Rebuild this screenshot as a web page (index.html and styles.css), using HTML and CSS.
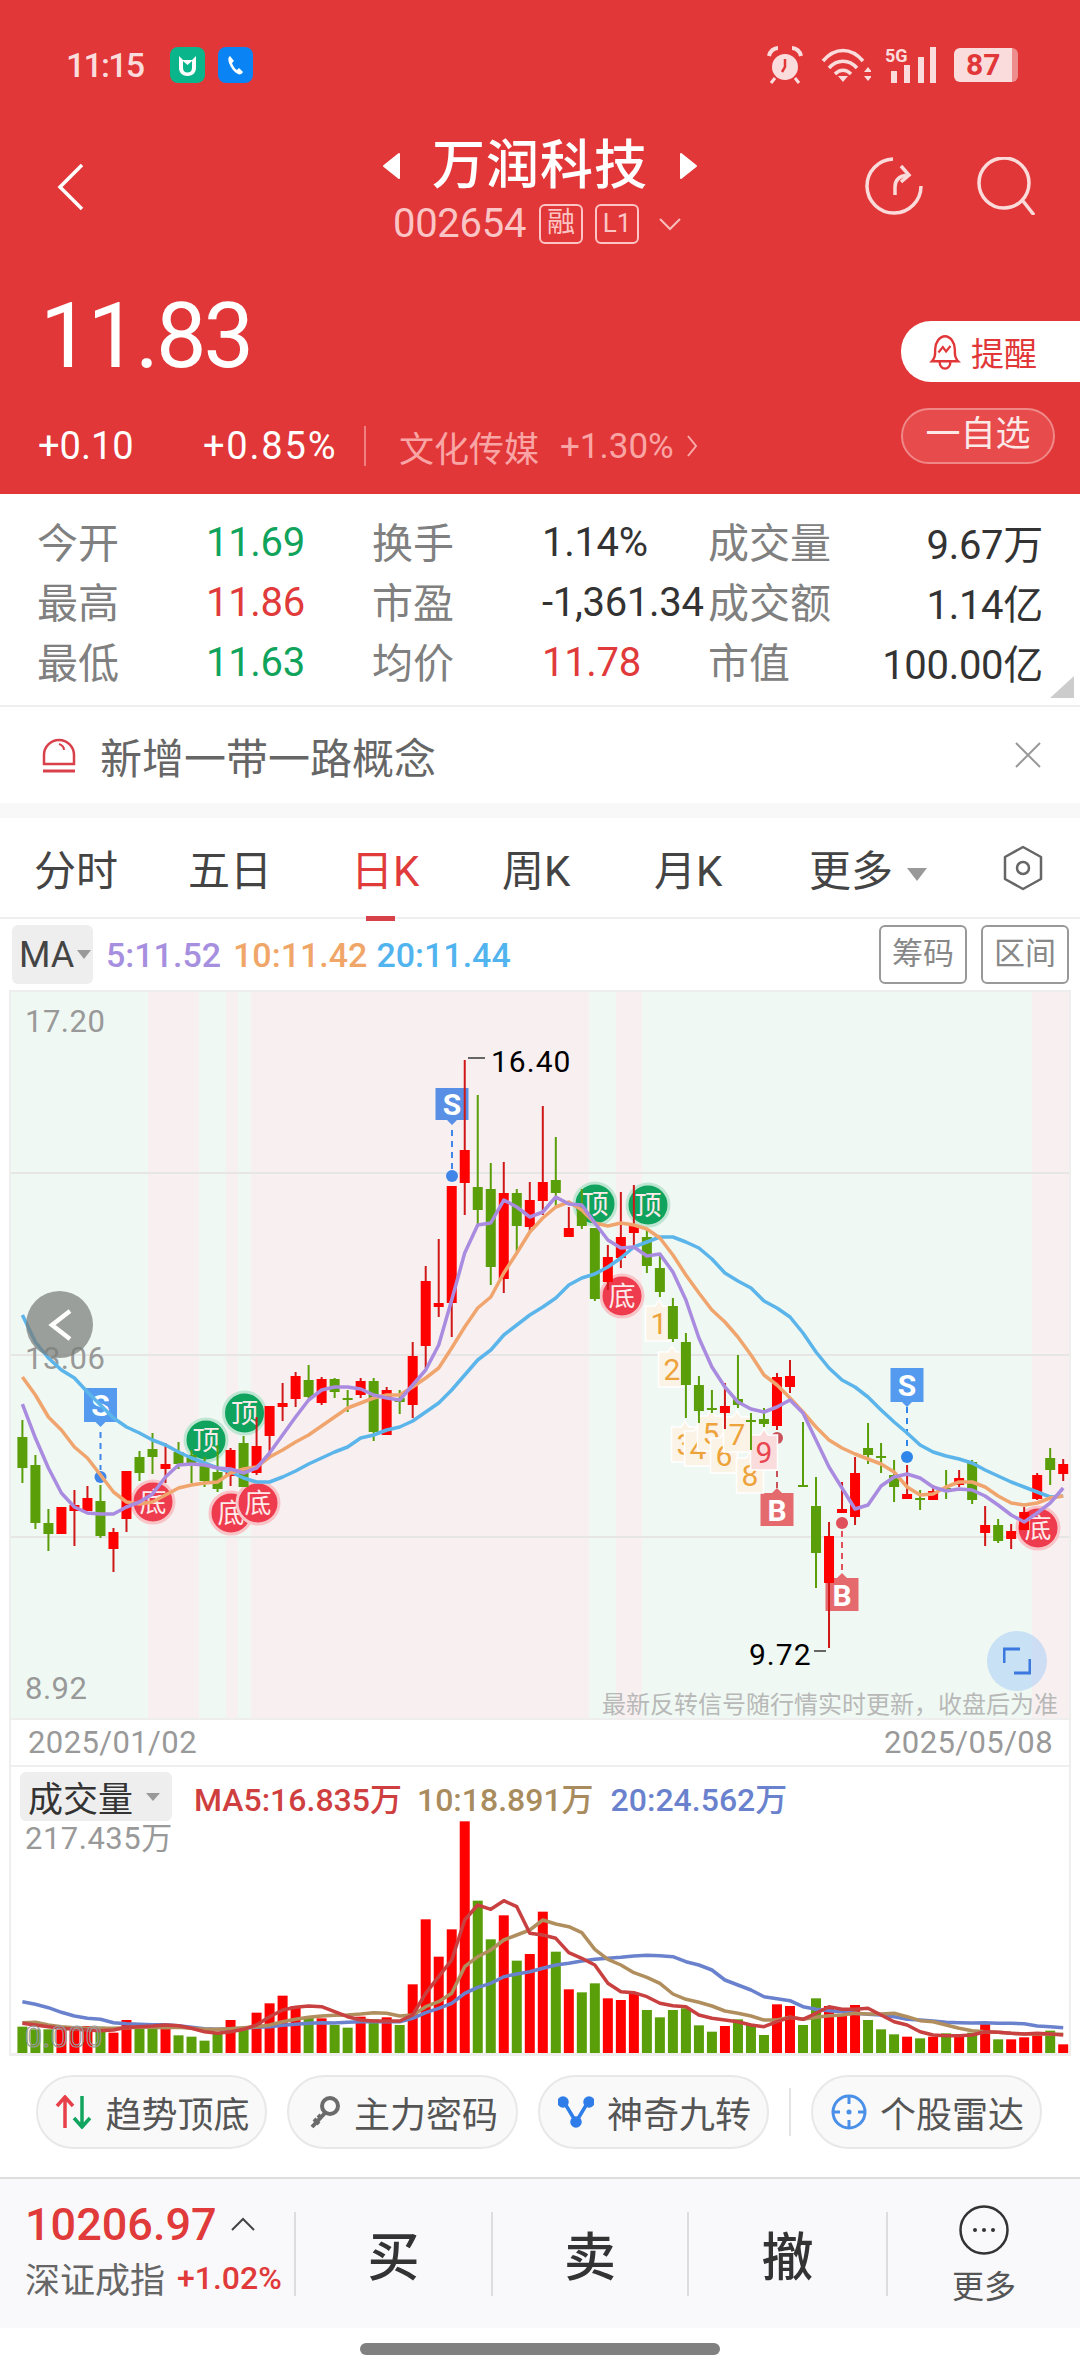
FILE: index.html
```html
<!DOCTYPE html>
<html lang="zh-CN">
<head>
    <meta charset="UTF-8">
    <meta name="viewport" content="width=device-width, initial-scale=1.0">
    <title>万润科技</title>
    <link rel="stylesheet" href="styles.css">
</head>
<body>
<div class="page">
    <div class="header">
        <div class="status">
            <span class="time">11:15</span>
            <svg class="app-icon" width="35" height="36" viewBox="0 0 35 36"><rect width="35" height="36" rx="8" fill="#0bb58c"/><path d="M9 9l4 4h9l4-4v12c0 5-4 8-8.500 8S9 26 9 21z" fill="#fff"/><path d="M13 14l4.500 4 4.500-4v7c0 3-2 4.500-4.500 4.500S13 24 13 21z" fill="#0bb58c"/></svg>
            <svg class="app-icon app-icon-2" width="35" height="36" viewBox="0 0 35 36"><rect width="35" height="36" rx="8" fill="#0a84f5"/><path d="M12 9c-2 1-2 4-1 7 2 5 5 9 9 11 2 1 4 0 5-2l-4-4-2 2c-2-1-4-4-5-7l2-2z" fill="#fff"/></svg>
            <div class="status-right">
                <svg width="38" height="38" viewBox="0 0 38 38" fill="none" stroke="#fbdcdc"><circle cx="19" cy="21" r="13" fill="#fbdcdc" stroke="none"/><path d="M19 13v8l-3 5" stroke="#e13739" stroke-width="2.500"/><path d="M3 10c1-5 5-8 9-8M35 10c-1-5-5-8-9-8" stroke-width="4"/><path d="M9 32l-4 5M29 32l4 5" stroke-width="3"/></svg>
                <svg class="wifi" width="50" height="36" viewBox="0 0 50 36" fill="none" stroke="#fbdcdc" stroke-width="3.500"><path d="M2 14c12-14 28-14 40 0M8 21c8-9 20-9 28 0M14 27c5-5 11-5 16 0"/><path d="M22 35l-5-6h10z" fill="#fbdcdc" stroke="none"/><path d="M47 20l-4 5h8zM47 34l-4-5h8z" fill="#fbdcdc" stroke="none"/></svg>
                <div class="signal">
                    <span class="five-g">5G</span>
                    <svg width="46" height="36" viewBox="0 0 46 36" fill="#fbdcdc"><rect x="0" y="24" width="6" height="12"/><rect x="13" y="18" width="6" height="18"/><rect x="27" y="10" width="6" height="26"/><rect x="39" y="0" width="6" height="36"/></svg>
                </div>
                <div class="battery"><span>87</span></div>
            </div>
        </div>
        <div class="nav">
            <svg class="back" width="28" height="48" viewBox="0 0 28 48" fill="none" stroke="#fff" stroke-width="3.500"><path d="M25 2L3 24l22 22"/></svg>
            <div class="nav-center">
                <div class="title-row">
                    <svg width="18" height="26" viewBox="0 0 18 26"><path d="M16 1v24L1 13z" fill="#fff" stroke="#fff" stroke-width="2" stroke-linejoin="round"/></svg>
                    <h1 class="title">万润科技</h1>
                    <svg width="18" height="26" viewBox="0 0 18 26"><path d="M2 1v24l15-12z" fill="#fff" stroke="#fff" stroke-width="2" stroke-linejoin="round"/></svg>
                </div>
                <div class="code-row">
                    <span class="code">002654</span>
                    <span class="tag">融</span>
                    <span class="tag tag-l1">L1</span>
                    <svg class="code-arrow" width="24" height="14" viewBox="0 0 24 14" fill="none" stroke="#f9bcbc" stroke-width="2"><path d="M2 2l10 10L22 2"/></svg>
                </div>
            </div>
            <div class="nav-actions">
                <svg width="58" height="58" viewBox="0 0 58 58" fill="none" stroke="#fbdada" stroke-width="3.500"><path d="M28 2A27 27 0 1 0 56 29"/><path d="M30 38v-8c0-8 5-11 12-12"/><path d="M36 9l8 9-8 7"/></svg>
                <svg width="58" height="58" viewBox="0 0 58 58" fill="none" stroke="#fbdada" stroke-width="3.500"><circle cx="27" cy="26" r="25"/><path d="M46 44l11 14"/></svg>
            </div>
        </div>
        <div class="quote">
            <div class="quote-left">
                <div class="price">11.83</div>
                <div class="change">
                    <span class="chg-a">+0.10</span>
                    <span class="chg-b">+0.85%</span>
                    <span class="sector">文化传媒</span>
                    <span class="sector-pct">+1.30%</span>
                    <svg width="12" height="22" viewBox="0 0 12 22" fill="none" stroke="#f9aaaa" stroke-width="2"><path d="M2 1l8 10-8 10"/></svg>
                </div>
            </div>
            <div class="quote-right">
                <div class="remind">
                    <svg width="34" height="36" viewBox="3 1 28 33" fill="none" stroke="#e13739" stroke-width="2.200"><path d="M5 26c3-3 3-6 3-11 0-6 4-12 9-12s9 6 9 12c0 5 0 8 3 11z"/><path d="M12 26c0 9 10 9 10 0"/><path d="M11 18l4-5 3 4 4-5" stroke-width="2"/></svg>
                    <span>提醒</span>
                </div>
                <div class="watch">一自选</div>
            </div>
        </div>
    </div>

    <div class="stats">
        <span class="lbl">今开</span><span class="val down">11.69</span>
        <span class="lbl">换手</span><span class="val">1.14%</span>
        <span class="lbl">成交量</span><span class="val right">9.67万</span>
        <span class="lbl">最高</span><span class="val up">11.86</span>
        <span class="lbl">市盈</span><span class="val">-1,361.34</span>
        <span class="lbl">成交额</span><span class="val right">1.14亿</span>
        <span class="lbl">最低</span><span class="val down">11.63</span>
        <span class="lbl">均价</span><span class="val up">11.78</span>
        <span class="lbl">市值</span><span class="val right">100.00亿</span>
        <span class="corner"></span>
    </div>

    <div class="notice">
        <svg width="36" height="36" viewBox="0 0 36 36" fill="none" stroke="#d8404a" stroke-width="2.500"><path d="M3 27V18a15 15 0 0 1 30 0v9z"/><path d="M18 7c3 1 5 3 5 6" stroke-width="2"/><path d="M2 34h32" stroke-width="3"/></svg>
        <span class="notice-text">新增一带一路概念</span>
        <svg class="notice-close" width="26" height="26" viewBox="0 0 26 26" fill="none" stroke="#999" stroke-width="2"><path d="M1 1l24 24M25 1L1 25"/></svg>
    </div>
    <div class="gap"></div>

    <div class="tabs">
        <span class="tab tab-1">分时</span>
        <span class="tab tab-2">五日</span>
        <span class="tab tab-3 active">日K</span>
        <span class="tab tab-4">周K</span>
        <span class="tab tab-5">月K</span>
        <span class="tab tab-6">更多<i class="tri tab-tri"></i></span>
        <svg class="tab-gear" width="42" height="46" viewBox="0 0 42 46" fill="none" stroke="#666" stroke-width="2.500"><path d="M21 2l18 10v22L21 44 3 34V12z" stroke-linejoin="round"/><circle cx="21" cy="23" r="6"/></svg>
    </div>

    <div class="ma-row">
        <div class="ma-pill">MA<i class="tri ma-tri"></i></div>
        <span class="ma ma5">5:11.52</span>
        <span class="ma ma10">10:11.42</span>
        <span class="ma ma20">20:11.44</span>
        <span class="ma-btn ma-btn-first">筹码</span>
        <span class="ma-btn">区间</span>
    </div>

    <div class="chart-box">
        <div class="kline">
            <svg id="kline" width="1058" height="726" viewBox="11 992 1058 726"></svg>
            <div class="slide-btn">
                <svg width="28" height="34" viewBox="0 0 28 34" fill="none" stroke="#fff" stroke-width="4.500"><path d="M24 3L6 17l18 14"/></svg>
            </div>
            <div class="expand-btn">
                <svg width="28" height="28" viewBox="0 0 28 28" fill="none" stroke="#3b78e0" stroke-width="3"><path d="M1 16V2h16M27 12v14H11"/></svg>
            </div>
        </div>
        <div class="dates"><span>2025/01/02</span><span>2025/05/08</span></div>
        <div class="volume">
            <svg id="volume" width="1058" height="286" viewBox="11 1767 1058 286"></svg>
            <div class="vol-head">
                <div class="vol-pill">成交量<i class="tri vol-tri"></i></div>
                <span class="vol-ma vol5">MA5:16.835万</span>
                <span class="vol-ma vol10">10:18.891万</span>
                <span class="vol-ma vol20">20:24.562万</span>
            </div>
        </div>
    </div>

    <div class="tools">
        <div class="tool">
            <svg width="37" height="34" viewBox="0 0 37 34" fill="none" stroke-width="3.500"><path d="M10 33V3M2 11l8-9 8 9" stroke="#e8404a"/><path d="M27 1v30M19 23l8 9 8-9" stroke="#12a55f"/></svg>
            <span>趋势顶底</span>
        </div>
        <div class="tool">
            <svg width="32" height="34" viewBox="0 0 32 34" fill="none" stroke="#6b6b6b" stroke-width="4"><circle cx="21" cy="11" r="8"/><path d="M16 18L3 32M5 24l5 5M9 20l4 4"/></svg>
            <span>主力密码</span>
        </div>
        <div class="tool">
            <svg width="36" height="34" viewBox="0 0 36 34" fill="#2f7de8" stroke="#2f7de8" stroke-width="3.500"><path d="M6 7l12 20L30 7" fill="none"/><circle cx="5" cy="7" r="4"/><circle cx="31" cy="7" r="4"/><circle cx="18" cy="27" r="4"/></svg>
            <span>神奇九转</span>
        </div>
        <span class="tool-line"></span>
        <div class="tool">
            <svg width="36" height="36" viewBox="0 0 36 36" fill="none" stroke="#4a8fe8" stroke-width="3"><circle cx="18" cy="18" r="16"/><path d="M18 1v9M18 26v9M1 18h8M27 18h8"/><circle cx="18" cy="18" r="2.500" fill="#4a8fe8" stroke="none"/></svg>
            <span>个股雷达</span>
        </div>
    </div>

    <div class="trade">
        <div class="index">
            <div class="index-top"><span class="index-val">10206.97</span><svg width="24" height="14" viewBox="0 0 24 14" fill="none" stroke="#444" stroke-width="2"><path d="M1 13L12 2l11 11"/></svg></div>
            <div class="index-bot"><span class="index-name">深证成指</span><span class="index-pct">+1.02%</span></div>
        </div>
        <div class="trade-btn trade-buy"><span class="trade-text">买</span></div>
        <div class="trade-btn"><span class="trade-text">卖</span></div>
        <div class="trade-btn trade-undo"><span class="trade-text">撤</span></div>
        <div class="trade-btn trade-more">
            <svg width="50" height="50" viewBox="0 0 50 50" fill="none" stroke="#333" stroke-width="2.500"><circle cx="25" cy="25" r="23.500"/><circle cx="16" cy="25" r="2" fill="#333" stroke="none"/><circle cx="25" cy="25" r="2" fill="#333" stroke="none"/><circle cx="34" cy="25" r="2" fill="#333" stroke="none"/></svg>
            <span>更多</span>
        </div>
    </div>

    <div class="home-area"><span class="home-bar"></span></div>
</div>
<script src="chart.js"></script>
</body>
</html>
```

FILE: styles.css
```css
* {
    box-sizing: border-box;
}
body {
    margin: 0;
    font-family: Roboto, "Noto Sans CJK SC", sans-serif;
    background: #fff;
}
.page {
    width: 1080px;
    height: 2376px;
    overflow: hidden;
    background: #fff;
}
svg {
    display: block;
    flex: none;
}
i {
    font-style: normal;
}
.tri {
    display: inline-block;
    width: 0;
    height: 0;
    border-left: 10px solid transparent;
    border-right: 10px solid transparent;
    border-top: 13px solid #999;
}

/* header */
.header {
    height: 494px;
    background: #e13739;
    color: #fff;
}
.status {
    display: flex;
    align-items: center;
    height: 84px;
    padding: 46px 62px 0 66px;
}
.time {
    font-size: 34px;
    font-weight: 500;
    letter-spacing: -1.8px;
    color: #fbdcdc;
    width: 104px;
}
.app-icon-2 {
    margin-left: 13px;
}
.status-right {
    display: flex;
    align-items: center;
    margin-left: auto;
}
.wifi {
    margin-left: 17px;
}
.signal {
    position: relative;
    width: 52px;
    margin-left: 14px;
    padding-left: 6px;
}
.five-g {
    position: absolute;
    left: 0;
    top: -2px;
    font-size: 18px;
    font-weight: 700;
    color: #fbdcdc;
}
.battery {
    width: 64px;
    height: 34px;
    margin-left: 17px;
    border-radius: 6px;
    background: linear-gradient(90deg, #fbdcdc 90%, #ee8d8d 90%);
    color: #e13739;
    font-size: 30px;
    font-weight: 700;
    line-height: 34px;
    padding-left: 12px;
}
.nav {
    display: grid;
    grid-template-columns: 1fr auto 1fr;
    padding: 0 45px;
    margin-top: 50px;
    height: 106px;
}
.back {
    margin: 29px 0 0 12px;
}
.title-row {
    display: flex;
    align-items: center;
    justify-content: center;
    height: 56px;
    margin-top: 4px;
    gap: 31px;
}
.title {
    margin: 0;
    font-size: 53px;
    font-weight: 500;
    line-height: 56px;
    letter-spacing: 1px;
}
.code-row {
    display: flex;
    align-items: center;
    margin: 6px 0 0 10px;
    color: #fbc5c5;
}
.code {
    font-size: 40px;
    letter-spacing: -0.3px;
    width: 146px;
}
.tag {
    width: 44px;
    height: 40px;
    border: 2px solid #fbc5c5;
    border-radius: 6px;
    font-size: 28px;
    line-height: 34px;
    text-align: center;
}
.tag-l1 {
    margin-left: 12px;
    font-size: 26px;
}
.code-arrow {
    margin-left: 19px;
}
.nav-actions {
    display: flex;
    justify-content: flex-end;
    gap: 54px;
    margin-top: 23px;
}
.quote {
    display: flex;
    justify-content: space-between;
    margin-top: 52px;
}
.quote-left {
    padding-left: 38px;
}
.price {
    height: 90px;
    margin-left: 2px;
    font-size: 90px;
    line-height: 90px;
    letter-spacing: -3px;
}
.change {
    display: flex;
    align-items: center;
    height: 40px;
    margin-top: 44px;
    font-size: 38px;
}
.chg-a {
    width: 165px;
}
.chg-b {
    width: 163px;
    height: 40px;
    line-height: 40px;
    letter-spacing: 1.8px;
    border-right: 2px solid #ef8080;
}
.sector {
    margin-left: 33px;
    font-size: 35px;
    color: #f9a5a5;
}
.sector-pct {
    margin: 0 12px 0 21px;
    font-size: 35px;
    color: #f9a5a5;
}
.quote-right {
    width: 179px;
    padding-top: 29px;
}
.remind {
    display: flex;
    align-items: center;
    height: 61px;
    padding-left: 27px;
    gap: 9px;
    background: #fff;
    border-radius: 30px 0 0 30px;
    color: #e13739;
    font-size: 33px;
}
.watch {
    width: 154px;
    height: 56px;
    margin-top: 26px;
    border: 2px solid #f08888;
    border-radius: 28px;
    background: #e74b4c;
    font-size: 35px;
    line-height: 50px;
    text-align: center;
    color: #fde8e8;
}

/* stats */
.stats {
    position: relative;
    display: grid;
    grid-template-columns: 169px 166px 170px 166px 166px 1fr;
    grid-auto-rows: 60px;
    align-items: center;
    height: 213px;
    padding: 18px 37px 0 37px;
    border-bottom: 2px solid #eee;
}
.lbl {
    margin-top: -5px;
    font-size: 41px;
    color: #808080;
}
.val {
    font-size: 40px;
    letter-spacing: -0.3px;
    color: #333;
    white-space: nowrap;
}
.val.down {
    color: #0fa35c;
}
.val.up {
    color: #e03a3a;
}
.val.right {
    text-align: right;
}
.corner {
    position: absolute;
    right: 6px;
    bottom: 7px;
    border-left: 24px solid transparent;
    border-bottom: 22px solid #ccc;
}

/* notice */
.notice {
    display: flex;
    align-items: center;
    height: 96px;
    padding: 0 39px 0 41px;
}
.notice-text {
    margin-left: 23px;
    font-size: 42px;
    color: #666;
}
.notice-close {
    margin-left: auto;
}
.gap {
    height: 15px;
    background: #f8f8f8;
}

/* period tabs */
.tabs {
    position: relative;
    display: flex;
    align-items: center;
    height: 101px;
    padding-left: 34px;
    border-bottom: 2px solid #eee;
    color: #444;
    font-size: 42px;
}
.tab {
    white-space: nowrap;
}
.tab-1 { width: 154px; }
.tab-2 { width: 163px; }
.tab-3 { width: 151px; }
.tab-4 { width: 152px; }
.tab-5 { width: 155px; }
.tab-6 { width: 193px; }
.active {
    position: relative;
    color: #e03a3a;
}
.active::after {
    content: "";
    position: absolute;
    left: 15px;
    bottom: -23px;
    width: 29px;
    height: 5px;
    background: #d8404a;
}
.tab-tri {
    margin-left: 14px;
    vertical-align: 5px;
}

/* MA legend */
.ma-row {
    display: flex;
    align-items: center;
    height: 71px;
    padding: 0 11px 0 12px;
}
.ma-pill {
    display: flex;
    align-items: center;
    width: 81px;
    height: 59px;
    padding-left: 7px;
    border-radius: 6px;
    background: #eee;
    color: #444;
    font-size: 36px;
}
.ma-tri {
    margin-left: 3px;
    border-left-width: 7px;
    border-right-width: 7px;
    border-top-width: 9px;
}
.ma {
    font-size: 34px;
    font-weight: 500;
}
.ma5 {
    margin-left: 13px;
    color: #a78fe0;
}
.ma10 {
    margin-left: 12px;
    color: #f0a668;
}
.ma20 {
    margin-left: 9px;
    color: #52b4ee;
}
.ma-btn {
    width: 88px;
    height: 59px;
    margin-left: 14px;
    border: 2px solid #999;
    border-radius: 6px;
    color: #888;
    font-size: 31px;
    line-height: 53px;
    text-align: center;
}
.ma-btn-first {
    margin-left: auto;
}

/* charts */
.chart-box {
    width: 1062px;
    height: 1066px;
    margin-left: 9px;
    border: 2px solid #eee;
    border-bottom-width: 3px;
}
.kline {
    position: relative;
    height: 726px;
}
.slide-btn {
    position: absolute;
    left: 15px;
    top: 299px;
    display: flex;
    align-items: center;
    justify-content: center;
    width: 67px;
    height: 67px;
    border-radius: 50%;
    background: rgba(120, 125, 120, 0.72);
}
.expand-btn {
    position: absolute;
    left: 976px;
    top: 639px;
    display: flex;
    align-items: center;
    justify-content: center;
    width: 60px;
    height: 60px;
    border-radius: 50%;
    background: rgba(170, 205, 245, 0.55);
}
.dates {
    display: flex;
    justify-content: space-between;
    height: 49px;
    padding: 0 16px 0 17px;
    border-top: 2px solid #eee;
    border-bottom: 2px solid #eee;
    color: #999;
    font-size: 31px;
    line-height: 46px;
    letter-spacing: 0.4px;
}
.volume {
    position: relative;
    height: 286px;
}
.vol-head {
    position: absolute;
    left: 9px;
    top: 5px;
    display: flex;
    align-items: center;
}
.vol-pill {
    display: flex;
    align-items: center;
    width: 152px;
    height: 49px;
    padding-left: 8px;
    border-radius: 6px;
    background: #eee;
    color: #333;
    font-size: 35px;
}
.vol-tri {
    margin-left: 13px;
    border-left-width: 7px;
    border-right-width: 7px;
    border-top-width: 8px;
}
.vol-ma {
    font-size: 32px;
    font-weight: 500;
}
.vol5 {
    margin-left: 22px;
    color: #cf3f3f;
}
.vol10 {
    margin-left: 15px;
    color: #a98c5e;
}
.vol20 {
    margin-left: 17px;
    color: #6a82cd;
}

/* svg text */
.axis {
    fill: #999;
    font-size: 31px;
    letter-spacing: 0.5px;
}
.extreme {
    fill: #000;
    font-size: 30px;
    letter-spacing: 1px;
}
.tip {
    fill: #b8b8b8;
    font-size: 24px;
}
.mark-text {
    fill: #fdeaea;
    font-size: 27px;
}
.flag-text {
    fill: #fff;
    font-size: 30px;
    font-weight: 700;
}
.num-text {
    fill: #eda23a;
    font-size: 30px;
}
.num-text-9 {
    fill: #e8454f;
}
.zero {
    fill: none;
    stroke: #999;
    stroke-width: 1.2;
    font-size: 30px;
    letter-spacing: 0.5px;
}

/* tool pills */
.tools {
    display: flex;
    align-items: center;
    gap: 20px;
    height: 121px;
    padding: 0 0 9px 36px;
}
.tool {
    display: flex;
    align-items: center;
    justify-content: center;
    gap: 13px;
    width: 231px;
    height: 74px;
    padding-left: 2px;
    border: 2px solid #e8e8e8;
    border-radius: 37px;
    background: #f9f9f9;
    color: #555;
    font-size: 36px;
}
.tool-line {
    width: 2px;
    height: 48px;
    background: #e4e4e4;
}

/* bottom trade bar */
.trade {
    display: flex;
    align-items: center;
    height: 151px;
    border-top: 2px solid #ddd;
    background: #f9f9fb;
}
.index {
    width: 294px;
    padding-left: 25px;
}
.index-top {
    display: flex;
    align-items: center;
    gap: 14px;
    height: 52px;
    margin-top: -6px;
}
.index-val {
    font-size: 45px;
    font-weight: 500;
    color: #e03a3a;
}
.index-bot {
    display: flex;
    align-items: center;
    margin-top: 2px;
}
.index-name {
    font-size: 35px;
    color: #666;
}
.index-pct {
    margin-left: 12px;
    font-size: 32px;
    font-weight: 500;
    color: #e03a3a;
}
.trade-btn {
    display: flex;
    align-items: center;
    justify-content: center;
    width: 196px;
    height: 84px;
    border-left: 2px solid #ddd;
}
.trade-buy {
    width: 197px;
}
.trade-undo {
    width: 199px;
}
.trade-text {
    font-size: 52px;
    font-weight: 500;
    color: #333;
}
.trade-more {
    flex-direction: column;
    width: 194px;
    gap: 17px;
    color: #555;
    font-size: 32px;
}
.trade-more span {
    line-height: 31px;
}
.home-area {
    display: flex;
    justify-content: center;
    padding-top: 15px;
}
.home-bar {
    width: 360px;
    height: 12px;
    border-radius: 6px;
    background: #808080;
}
```

FILE: chart.js
```js
// open/close/high/low are stored as page pixels, traced off the day chart
// [wick top, wick bottom, body top, body bottom, colour]
const candles = [
    [1420,1483,1437,1468,'g'],[1455,1529,1465,1523,'g'],[1509,1551,1523,1534,'g'],[1507,1534,1507,1534,'r'],
    [1490,1546,1505,1511,'r'],[1486,1511,1498,1511,'r'],[1485,1538,1501,1536,'g'],[1528,1572,1532,1549,'r'],
    [1471,1532,1471,1519,'r'],[1451,1481,1457,1473,'g'],[1433,1474,1449,1457,'g'],[1443,1483,1464,1469,'r'],
    [1442,1469,1452,1464,'g'],[1450,1483,1455,1463,'g'],[1457,1487,1463,1481,'g'],[1445,1492,1472,1489,'g'],
    [1448,1486,1450,1476,'r'],[1436,1487,1443,1487,'g'],[1417,1475,1446,1473,'r'],[1406,1458,1406,1436,'r'],
    [1383,1421,1403,1407,'r'],[1372,1407,1376,1399,'r'],[1365,1398,1380,1397,'g'],[1377,1405,1379,1403,'r'],
    [1378,1398,1379,1392,'g'],[1390,1412,1398,1400,'g'],[1378,1398,1381,1395,'r'],[1378,1441,1381,1432,'g'],
    [1387,1435,1390,1435,'r'],[1390,1414,1398,1402,'g'],[1342,1418,1356,1405,'r'],[1266,1368,1281,1346,'r'],
    [1239,1317,1303,1307,'r'],[1186,1337,1186,1303,'r'],[1060,1215,1150,1183,'r'],[1095,1225,1187,1210,'g'],
    [1163,1285,1189,1267,'g'],[1162,1293,1193,1279,'r'],[1189,1253,1193,1226,'g'],[1182,1232,1200,1227,'r'],
    [1106,1215,1182,1201,'r'],[1137,1207,1180,1193,'g'],[1207,1237,1228,1237,'r'],[1189,1229,1210,1226,'g'],
    [1228,1301,1228,1299,'g'],[1245,1290,1257,1282,'r'],[1192,1268,1237,1258,'r'],[1185,1247,1225,1233,'r'],
    [1230,1273,1237,1266,'g'],[1256,1297,1268,1292,'g'],[1298,1342,1306,1339,'g'],[1333,1418,1342,1385,'g'],
    [1376,1423,1385,1411,'g'],[1390,1413,1408,1410,'g'],[1383,1429,1406,1413,'r'],[1355,1408,1399,1405,'g'],
    [1413,1450,1420,1422,'g'],[1408,1427,1419,1424,'g'],[1373,1430,1377,1426,'r'],[1360,1393,1376,1387,'r'],
    [1422,1487,1485,1487,'g'],[1477,1588,1506,1553,'g'],[1522,1648,1536,1583,'r'],[1482,1513,1509,1513,'r'],
    [1457,1525,1473,1517,'r'],[1423,1464,1448,1455,'g'],[1443,1473,1456,1458,'g'],[1460,1502,1475,1487,'g'],
    [1465,1499,1494,1499,'r'],[1490,1510,1498,1500,'g'],[1485,1500,1491,1500,'r'],[1470,1499,1488,1490,'g'],
    [1470,1487,1478,1485,'r'],[1460,1504,1462,1500,'g'],[1506,1546,1525,1533,'r'],[1519,1543,1525,1541,'g'],
    [1524,1549,1531,1539,'r'],[1507,1530,1512,1530,'r'],[1473,1500,1475,1499,'r'],[1448,1485,1458,1470,'g'],
    [1459,1481,1464,1474,'r']
];
const ma5 = [1404,1438,1468,1493,1507,1513,1514,1514,1507,1502,1494,1477,1465,1464,1465,1468,1469,1473,1468,1453,1435,1417,1400,1390,1387,1387,1389,1395,1398,1400,1385,1370,1345,1300,1253,1225,1223,1200,1207,1217,1212,1197,1204,1205,1223,1240,1248,1247,1256,1254,1272,1300,1338,1367,1387,1402,1409,1412,1407,1400,1413,1440,1467,1488,1509,1505,1486,1477,1474,1478,1487,1491,1489,1490,1496,1505,1515,1522,1513,1503,1488];
const ma10 = [1377,1395,1417,1430,1447,1458,1475,1492,1502,1504,1502,1495,1488,1485,1483,1482,1473,1469,1467,1457,1450,1442,1435,1426,1417,1408,1403,1398,1395,1395,1387,1378,1368,1348,1327,1308,1297,1273,1253,1232,1218,1207,1202,1210,1223,1226,1223,1225,1229,1238,1255,1275,1293,1310,1322,1337,1355,1375,1385,1398,1412,1427,1440,1448,1454,1459,1464,1472,1487,1495,1494,1487,1482,1482,1487,1496,1503,1505,1503,1498,1496];
const ma20 = [1315,1342,1358,1370,1378,1392,1405,1418,1427,1433,1440,1445,1452,1458,1463,1468,1472,1478,1482,1482,1477,1471,1464,1458,1452,1447,1438,1435,1430,1427,1421,1412,1403,1390,1375,1360,1350,1335,1325,1315,1307,1298,1285,1278,1274,1267,1258,1247,1242,1237,1237,1242,1248,1259,1273,1281,1288,1301,1308,1317,1333,1352,1368,1380,1387,1397,1410,1422,1433,1445,1452,1456,1459,1463,1470,1476,1482,1487,1492,1497,1496];

// volume values are thirds of a pixel below y=1760
const volTop = [800,808,808,810,800,798,800,818,780,805,803,795,826,830,842,815,780,808,758,730,707,738,770,775,795,803,770,778,772,795,673,478,590,508,184,422,538,466,602,582,455,575,688,697,670,715,720,700,750,772,750,745,796,815,798,778,795,825,733,738,795,715,738,765,735,780,808,823,830,835,830,820,825,818,792,838,838,832,822,812,853];
const vol5 = [790,795,800,805,808,810,812,810,802,800,798,795,797,805,815,820,815,808,795,770,750,742,738,740,755,770,780,783,783,783,765,700,650,600,480,435,448,422,440,520,525,535,578,595,615,670,695,698,710,730,737,740,765,775,780,785,795,800,785,772,778,760,740,748,748,745,765,785,795,815,825,827,827,825,815,817,820,822,820,822,825];
const vol10 = [788,787,795,800,803,805,805,805,803,802,802,803,802,805,808,808,806,803,800,795,785,778,772,768,766,765,762,758,760,768,765,740,725,700,620,590,570,540,525,510,480,492,500,518,568,598,615,638,652,670,702,718,727,738,753,760,768,780,780,772,778,772,767,765,760,762,762,760,770,782,785,795,805,812,815,817,820,822,822,823,823];
const vol20 = [725,733,743,757,768,775,778,788,791,793,794,794,797,802,806,808,806,805,802,800,796,793,790,788,789,787,785,785,785,785,775,758,745,730,700,682,670,650,642,635,625,615,610,603,598,595,592,588,586,587,590,605,615,630,660,675,690,710,716,722,740,748,752,755,760,763,765,770,778,780,783,787,788,789,788,790,790,791,798,800,803];

const bands = [
    [11,148,'#eff8f2'],[148,199,'#f8f0f0'],[199,226,'#eff8f2'],[226,238,'#f8f0f0'],[238,251,'#eff8f2'],
    [251,589,'#f8f0f0'],[589,616,'#eff8f2'],[616,642,'#f8f0f0'],[642,1032,'#eff8f2'],[1032,1069,'#f8f0f0']
];
const RED = '#ff0000', GREEN = '#5a9e0a';

function cx(i) {
    return 22.4 + 13.01 * i;
}
function vy(v) {
    return 1760 + v / 3;
}
function line(values, color, toY) {
    const pts = values.map((v, i) => cx(i).toFixed(1) + ',' + toY(v).toFixed(1)).join(' ');
    return `<polyline points="${pts}" fill="none" stroke="${color}" stroke-width="3.5" stroke-linejoin="round"/>`;
}
function same(v) {
    return v;
}
function circleMark(x, y, text) {
    const fill = text === '顶' ? '#0fa35d' : '#ee3b4d';
    const halo = text === '顶' ? '#bfe6d3' : '#f8c4c8';
    return `<circle cx="${x}" cy="${y}" r="21" fill="${fill}" stroke="${halo}" stroke-width="3"/>` +
        `<text class="mark-text" x="${x}" y="${y + 10}" text-anchor="middle">${text}</text>`;
}
function flag(x, top, bottom, tipDown, color, text) {
    const l = x - 16.5, r = x + 16.5;
    const shape = tipDown
        ? `M${l} ${top}H${r}V${bottom}H${x + 5}L${x} ${bottom + 5}L${x - 5} ${bottom}H${l}Z`
        : `M${l} ${top}H${x - 5}L${x} ${top - 5}L${x + 5} ${top}H${r}V${bottom}H${l}Z`;
    return `<path d="${shape}" fill="${color}"/>` +
        `<text class="flag-text" x="${x}" y="${(top + bottom) / 2 + 11}" text-anchor="middle">${text}</text>`;
}
function stem(x, y1, y2, dotY, color) {
    return `<path d="M${x} ${y1}V${y2}" stroke="${color}" stroke-width="2" stroke-dasharray="6 5"/>` +
        `<circle cx="${x}" cy="${dotY}" r="6" fill="${color}"/>`;
}
function numMark(x, top, n) {
    const h = 35, w = 13.5;
    const fill = n === 9 ? '#fbdcdc' : '#fbf3e6';
    const cls = n === 9 ? 'num-text num-text-9' : 'num-text';
    return `<path d="M${x - w} ${top}L${x - 4} ${top}L${x} ${top - 6}L${x + 4} ${top}L${x + w} ${top}V${top + h}H${x - w}Z" fill="${fill}" stroke="#fff" stroke-width="1.500"/>` +
        `<text class="${cls}" x="${x}" y="${top + 28}" text-anchor="middle">${n}</text>`;
}

function drawKline() {
    let s = '';
    bands.forEach(b => {
        s += `<rect x="${b[0]}" y="992" width="${b[1] - b[0]}" height="726" fill="${b[2]}"/>`;
    });
    [1173, 1355, 1537].forEach(y => {
        s += `<path d="M11 ${y}H1069" stroke="#e6e6e6" stroke-width="2"/>`;
    });
    s += '<text class="axis" x="25" y="1032">17.20</text>';
    s += '<text class="axis" x="25" y="1369">13.06</text>';
    s += '<text class="axis" x="25" y="1699">8.92</text>';
    s += '<text class="tip" x="1058" y="1713" text-anchor="end">最新反转信号随行情实时更新，收盘后为准</text>';

    // buy / sell flags
    s += stem(452, 1130, 1170, 1176, '#3f86e8') + flag(452, 1088, 1120, true, '#5a8fe6', 'S');
    s += stem(100.5, 1432, 1470, 1477, '#3f86e8') + flag(100.5, 1388, 1422, true, '#549bf0', 'S');
    s += stem(907, 1407, 1450, 1457, '#2f86ea') + flag(907, 1368, 1402, true, '#549bf0', 'S');
    s += stem(777, 1488, 1445, 1438, '#c9515a') + flag(777, 1493, 1526, false, '#e56a6e', 'B');
    s += stem(842, 1570, 1530, 1523, '#e0505a') + flag(842, 1578, 1611, false, '#e56a6e', 'B');

    // nine-turn counters
    [[659,1306,1],[672,1352,2],[685,1427,3],[698,1431,4],[711,1416,5],[724,1438,6],[737,1417,7],[750,1458,8],[764,1435,9]].forEach(m => {
        s += numMark(m[0], m[1], m[2]);
    });

    [[595,1204,'顶'],[648,1205,'顶'],[206,1440,'顶'],[244.5,1413,'顶'],
     [622,1296,'底'],[153,1502,'底'],[231,1513,'底'],[258,1503,'底'],[1038,1528,'底']].forEach(m => {
        s += circleMark(m[0], m[1], m[2]);
    });

    candles.forEach((c, i) => {
        const x = cx(i), col = c[4] === 'r' ? RED : GREEN;
        const wick = c[4] === 'r' ? '#d01818' : GREEN;
        s += `<rect x="${x - 1}" y="${c[0]}" width="2" height="${c[1] - c[0]}" fill="${wick}"/>`;
        s += `<rect x="${x - 5}" y="${c[2]}" width="10" height="${c[3] - c[2]}" fill="${col}"/>`;
    });
    s += line(ma20, '#5cb5ea', same) + line(ma10, '#f0a56e', same) + line(ma5, '#a98be0', same);

    s += '<path d="M468 1058H485" stroke="#666" stroke-width="2"/>';
    s += '<text class="extreme" x="491" y="1072">16.40</text>';
    s += '<path d="M814 1651H826" stroke="#666" stroke-width="2"/>';
    s += '<text class="extreme" x="749" y="1665">9.72</text>';
    document.getElementById('kline').innerHTML = s;
}

function drawVolume() {
    let s = '';
    candles.forEach((c, i) => {
        const y = vy(volTop[i]);
        s += `<rect x="${cx(i) - 5}" y="${y}" width="10" height="${2053 - y}" fill="${c[4] === 'r' ? RED : GREEN}"/>`;
    });
    s += line(vol20, '#6a82cd', vy) + line(vol10, '#b08e5e', vy) + line(vol5, '#c8403f', vy);
    s += '<text class="axis" x="25" y="1849">217.435万</text>';
    s += '<text class="zero" x="25" y="2047">0.000</text>';
    document.getElementById('volume').innerHTML = s;
}

drawKline();
drawVolume();
```
